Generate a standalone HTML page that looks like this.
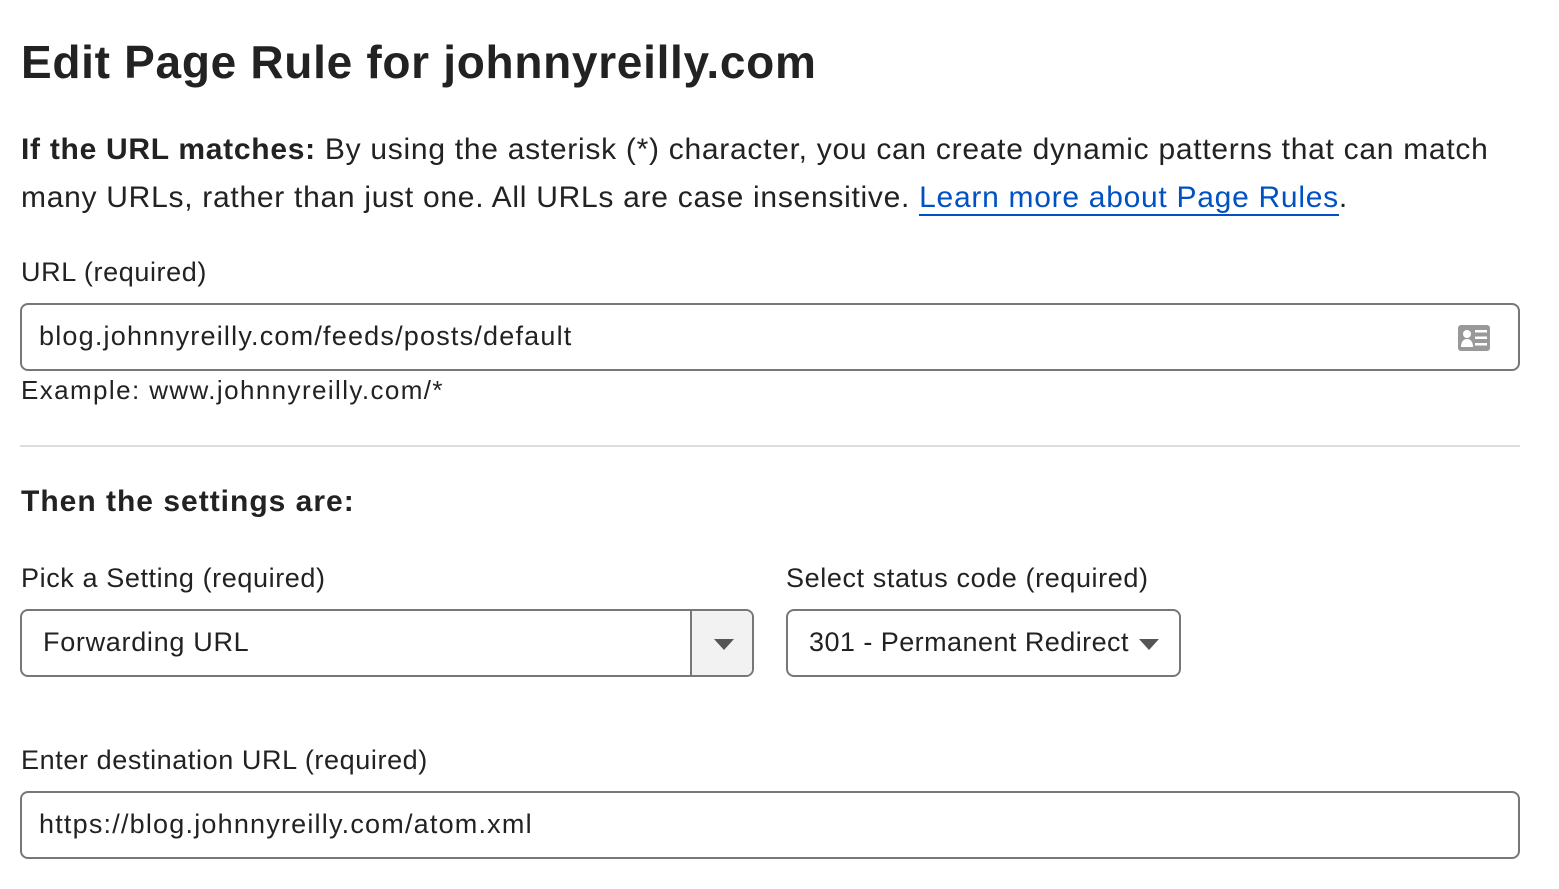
<!DOCTYPE html>
<html><head><style>
body{margin:0;background:#fff;font-family:"Liberation Sans",sans-serif;color:#222;width:1559px;height:889px;overflow:hidden;position:relative}
.a{position:absolute;white-space:nowrap}
h1{position:absolute;left:21px;top:35px;margin:0;font-size:46px;font-weight:bold;letter-spacing:0.7px;color:#222}
.p{left:21px;top:126px;font-size:30px;line-height:48px;letter-spacing:0.72px;width:1530px;white-space:normal}
.p a{color:#0051c3;text-decoration:none;border-bottom:2px solid #0051c3}
.lbl{font-size:27px;letter-spacing:0.6px;color:#222}
.box{position:absolute;border:2px solid #777;border-radius:8px;box-sizing:border-box;background:#fff}
.val{position:absolute;font-size:27px;letter-spacing:1.2px;color:#222;white-space:nowrap}
</style></head><body>
<h1>Edit Page Rule for johnnyreilly.com</h1>
<div class="a p"><b>If the URL matches:</b> By using the asterisk (*) character, you can create dynamic patterns that can match many URLs, rather than just one. All URLs are case insensitive. <a>Learn more about Page Rules</a>.</div>
<div class="a lbl" style="left:21px;top:257px">URL (required)</div>
<div class="box" style="left:20px;top:303px;width:1500px;height:68px">
<div class="val" style="left:17px;top:16px">blog.johnnyreilly.com/feeds/posts/default</div>
<svg style="position:absolute;left:1436px;top:20px" width="32" height="26" viewBox="0 0 32 26"><rect width="32" height="26" rx="3" fill="#999"/><circle cx="9" cy="9" r="4" fill="#fff"/><path d="M3 22c0-6 3-8 6-8s6 2 6 8z" fill="#fff"/><rect x="17" y="5" width="12" height="2.5" fill="#fff"/><rect x="17" y="11.5" width="12" height="2.5" fill="#fff"/><rect x="17" y="18" width="12" height="2.5" fill="#fff"/></svg>
</div>
<div class="a lbl" style="left:21px;top:375px;font-size:26px;letter-spacing:1.4px">Example: www.johnnyreilly.com/*</div>
<div class="a" style="left:20px;top:445px;width:1500px;height:2px;background:#ddd"></div>
<div class="a" style="left:21px;top:485px;font-size:30px;font-weight:bold;letter-spacing:1px">Then the settings are:</div>
<div class="a lbl" style="left:21px;top:563px">Pick a Setting (required)</div>
<div class="box" style="left:20px;top:609px;width:734px;height:68px;overflow:hidden">
<div class="val" style="left:21px;top:16px;letter-spacing:0.7px">Forwarding URL</div>
<div style="position:absolute;left:668px;top:0;width:64px;height:64px;background:#f2f2f2;border-left:2px solid #777"></div>
<div style="position:absolute;left:692px;top:28px;border-left:10px solid transparent;border-right:10px solid transparent;border-top:11px solid #555"></div>
</div>
<div class="a lbl" style="left:786px;top:563px">Select status code (required)</div>
<div class="box" style="left:786px;top:609px;width:395px;height:68px">
<div class="val" style="left:21px;top:16px;letter-spacing:0.45px">301 - Permanent Redirect</div>
<div style="position:absolute;left:351px;top:28px;border-left:10px solid transparent;border-right:10px solid transparent;border-top:11px solid #555"></div>
</div>
<div class="a lbl" style="left:21px;top:745px">Enter destination URL (required)</div>
<div class="box" style="left:20px;top:791px;width:1500px;height:68px">
<div class="val" style="left:17px;top:16px">https://blog.johnnyreilly.com/atom.xml</div>
</div>
</body></html>
